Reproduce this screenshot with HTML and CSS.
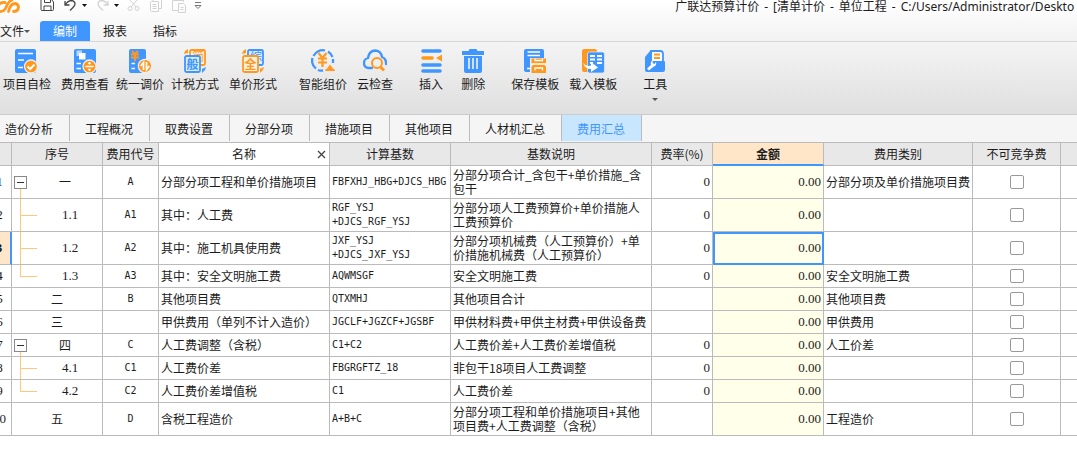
FILE: index.html
```
<!DOCTYPE html>
<html lang="zh-CN">
<head>
<meta charset="utf-8">
<title>广联达预算计价</title>
<link rel="stylesheet" href="styles.css">
</head>
<body>
<header class="top">
  <div class="titlebar">
    <div class="quick">
      <svg class="logo" width="22" height="15" viewBox="0 0 22 15" fill="none" stroke="#ff981f" stroke-width="2.800" stroke-linecap="round"><path d="M-1 4.500Q1 2 5 2.500M-1 11.500Q4 12 6 7.500Q8 1.500 12 0"/><path d="M8.500 11.500Q10 4 15 3.500Q18.500 4 18.500 7.500Q18 11.500 13.500 11.500"/></svg>
      <button class="qbtn save" aria-label="保存"><svg width="15" height="13" viewBox="0 0 15 13" fill="none" stroke="#444"><path d="M1 -1V9.500Q1 10.500 2 10.500H12.500Q13.500 10.500 13.500 9.500V2L11 -1M4.500 0V2.500H10.500V0M4 10V6H11V10"/></svg></button>
      <button class="qbtn undo" aria-label="撤销"><svg width="24" height="13" viewBox="0 0 24 13"><path d="M1 1V5H5.500M1.500 4.500Q4 .5 7.500 .5Q11 1 11 4Q11 6 6 10.500" fill="none" stroke="#444" stroke-width="1.300"/><path d="M18 4H23L20.500 7Z" fill="#111"/></svg></button>
      <button class="qbtn redo" aria-label="重做"><svg width="24" height="13" viewBox="0 0 24 13"><path d="M11 1V5H6.500M10.500 4.500Q8 .5 4.500 .5Q1 1 1 4Q1 6 6 10.500" fill="none" stroke="#d2d2d2" stroke-width="1.300"/><path d="M17 4H22L19.500 7Z" fill="#111"/></svg></button>
      <button class="qbtn cut" aria-label="剪切"><svg width="13" height="13" viewBox="0 0 13 13" fill="none" stroke="#d2d2d2"><path d="M2 -1L9 7M11 -1L4 7"/><circle cx="3" cy="8.500" r="2"/><circle cx="10" cy="8.500" r="2"/></svg></button>
      <button class="qbtn copy" aria-label="复制"><svg width="13" height="13" viewBox="0 0 13 13" fill="none" stroke="#d2d2d2"><path d="M3 1V-1H11.500V8.500H9M.5 2.500Q.5 1.500 1.500 1.500H8.500V11.500H1.500Q.5 11.500 .5 10.500ZM2.500 4.500H6.500M2.500 6.500H6.500M2.500 8.500H6.500"/></svg></button>
      <button class="qbtn paste" aria-label="粘贴"><svg width="15" height="14" viewBox="0 0 15 14" fill="none" stroke="#d2d2d2"><path d="M11.500 2V.5H.5V10.500H6M3 .5V-1M9 .5V-1M6.500 3.500H11.500L13.500 5.500V12.500H6.500ZM8.500 7.500H11.500M8.500 9.500H11.500"/></svg></button>
      <button class="qbtn more" aria-label="更多"><svg width="8" height="8" viewBox="0 0 8 8" fill="none" stroke="#777"><path d="M1 .5H7M1 3.500H7L4 6.500Z"/></svg></button>
    </div>
    <h1 class="title"><span>广联达预算计价</span><span>-</span><span>[清单计价</span><span>-</span><span>单位工程</span><span>-</span><span>C:/Users/Administrator/Deskto</span></h1>
  </div>
  <nav class="menu">
    <button class="file">文件<i class="caret"></i></button>
    <button class="item active">编制</button>
    <button class="item">报表</button>
    <button class="item">指标</button>
  </nav>
</header>

<section class="ribbon">
  <div class="group">
    <button class="tool"><svg viewBox="0 0 24 24"><rect width="21" height="24" rx="2" fill="#4096ff"/><path d="M3 4.500H18M3 11H9M3 18.500H8" stroke="#fff" stroke-width="1.600"/><circle cx="16" cy="17.500" r="6.500" fill="#ff981f" stroke="#eee" stroke-width="1.300"/><path d="M12.500 17.500L15.200 20L19.500 15.500" fill="none" stroke="#fff" stroke-width="2"/></svg>项目自检</button>
    <button class="tool"><svg viewBox="0 0 24 24"><rect x="1" width="22" height="24" rx="2" fill="#4096ff"/><path d="M3.500 1.500H9V7H3.500Z" fill="#b8d8ff"/><path d="M6 4H12.500V10.500H6Z" fill="#fff"/><path d="M3.500 14.500H8M3.500 19.500H8" stroke="#fff" stroke-width="1.600"/><circle cx="16.500" cy="17.500" r="6.500" fill="#ff981f" stroke="#eee" stroke-width="1.300"/><path d="M12.500 17.500H20.500" stroke="#fff" stroke-width="1.500"/><circle cx="16.500" cy="14.300" r="1.200" fill="#fff"/><circle cx="16.500" cy="20.700" r="1.200" fill="#fff"/></svg>费用查看</button>
    <button class="tool drop"><svg viewBox="0 0 24 24"><rect x="1" width="17" height="24" rx="2" fill="#4096ff"/><path d="M4 2L7 5L10 2M3 5.500H11M3 8.500H11M7 5V12" fill="none" stroke="#ff981f" stroke-width="1.900"/><path d="M3.500 14.500H7M3.500 19.500H7" stroke="#fff" stroke-width="1.500"/><circle cx="17" cy="17" r="6.700" fill="#ff981f" stroke="#eee" stroke-width="1.200"/><path d="M15.500 21V13.500L12.700 17M18.500 13V20.500L21.300 17" fill="none" stroke="#fff" stroke-width="1.700"/></svg>统一调价<i class="caret"></i></button>
    <button class="tool"><svg viewBox="0 0 24 24"><rect x="7" y="1" width="15" height="15" rx="1.500" fill="#fff0dd" stroke="#ff981f" stroke-width="1.800"/><text x="9" y="12" font-size="12" fill="#ff981f">简</text><rect x="2" y="7" width="15" height="16" rx="1.500" fill="#dcecff" stroke="#4096ff" stroke-width="1.800"/><text x="3.500" y="19.500" font-size="12" font-weight="700" fill="#4096ff">般</text><path d="M1 5L2 2L5 0V4Z" fill="#ff981f"/><path d="M23 18L22 21L19 24V20Z" fill="#4096ff"/></svg>计税方式</button>
    <button class="tool"><svg viewBox="0 0 24 24"><rect x="7" y="1" width="15" height="15" rx="1.500" fill="#dcecff" stroke="#4096ff" stroke-width="1.800"/><text x="9" y="12" font-size="12" fill="#4096ff">综</text><rect x="2" y="7" width="15" height="16" rx="1.500" fill="#fff0dd" stroke="#ff981f" stroke-width="1.800"/><text x="3.500" y="19.500" font-size="12" font-weight="700" fill="#ff981f">全</text><path d="M1 5L2 2L5 0V4Z" fill="#ff981f"/><path d="M23 18L22 21L19 24V20Z" fill="#ff981f"/></svg>单价形式</button>
  </div>
  <div class="group near">
    <button class="tool"><svg viewBox="0 0 24 24"><path d="M14 1.500A10 10 0 0 0 2.500 7M1.500 9A10 10 0 0 0 5 19.500M7 21Q9 22 12 21.500M17 2.500Q20 4.500 21.500 8M22 10V14" fill="none" stroke="#4096ff" stroke-width="2.300"/><path d="M7.500 4L11.500 9L15.500 4M7 9.500H16M7 13.500H16M11.500 9V18" fill="none" stroke="#ff981f" stroke-width="2.200"/><path d="M14 22Q14 20 16 19.500L19 15.500L22 19.500Q24 20 24 22Z" fill="#ff981f"/></svg>智能组价</button>
    <button class="tool"><svg viewBox="0 0 24 24"><path d="M9 19H5.500Q1 18.500 1 14Q1 10 5 9Q6 1.500 12.500 1.500Q18 2 19 8Q23.500 10 23 15" fill="none" stroke="#4096ff" stroke-width="2.300" stroke-linecap="round"/><circle cx="14" cy="14" r="5" fill="none" stroke="#ff981f" stroke-width="2"/><path d="M17.500 18L21 21.500" stroke="#ff981f" stroke-width="3"/></svg>云检查</button>
  </div>
  <div class="group wide">
    <button class="tool"><svg viewBox="0 0 24 24"><path d="M4 2H21M4 16H21M4 22H21" stroke="#4096ff" stroke-width="3.600" stroke-linecap="round"/><path d="M4 9H13" stroke="#ff981f" stroke-width="3.600" stroke-linecap="round"/><path d="M17 9L23 5.500V12.500Z" fill="#ff981f"/></svg>插入</button>
    <button class="tool"><svg viewBox="0 0 24 24"><path d="M8.500 0H15.500L16.500 2H23V6H1V2H7.500ZM3 7H21V22Q21 24 19 24H5Q3 24 3 22Z" fill="#4096ff"/><path d="M8 9V20M12 9V20M16 9V20" stroke="#f4f4f4" stroke-width="1.600"/></svg>删除</button>
  </div>
  <div class="group">
    <button class="tool"><svg viewBox="0 0 24 24"><rect x="1" width="20" height="23" rx="2" fill="#4096ff"/><path d="M4.500 3H17M4.500 6.500H17M4 19.500H7" stroke="#fff" stroke-width="1.500"/><path d="M7 9H24V24H7Z" fill="#eee"/><path d="M8.500 9.500H23V14.500L21.500 16L23 17.500V24H8.500V17.500L10 16L8.500 14.500Z" fill="#ff981f"/><path d="M12 9.500V11.500H19.500V9.500M8.500 15H23M12 21.500V19H19.500V21.500" fill="none" stroke="#fff" stroke-width="1.300"/></svg>保存模板</button>
    <button class="tool"><svg viewBox="0 0 24 24"><rect x="1" width="15" height="23" rx="2" fill="#ff981f"/><rect x="6.500" y="3" width="17" height="21" rx="2" fill="#4096ff" stroke="#eee" stroke-width=".7"/><path d="M9 7H14M9 10.500H14M9 14H12M16 7H21M16 10.500H21M16 14H21" stroke="#fff" stroke-width="1.800"/><path d="M2 14Q5 18 10 16.500V13L17 18.500L10 23V20Q4 20 2 14Z" fill="#fff"/></svg>载入模板</button>
  </div>
  <div class="group">
    <button class="tool"><svg viewBox="0 0 24 24"><path d="M8 2H17Q20 2 20 5V15H8Z" fill="#fff" stroke="#4096ff" stroke-width="1.800"/><path d="M11 5.500H17M11 9H17" stroke="#ff981f" stroke-width="1.900"/><path d="M2 8L7 2Q8 1 9 2V12H21Q22 12 22 13V21Q22 23 20 23H4Q2 23 2 21Z" fill="#4096ff"/><path d="M4 19.500L8 16Q7 12 10 11.500L9.500 14L11.500 15L13 13Q14 17 10 18L6 21.500Z" fill="#fff"/></svg>工具<i class="caret"></i></button>
  </div>
</section>

<nav class="tabs">
  <button class="tab">造价分析</button><button class="tab">工程概况</button><button class="tab">取费设置</button><button class="tab">分部分项</button><button class="tab">措施项目</button><button class="tab">其他项目</button><button class="tab">人材机汇总</button><button class="tab active">费用汇总</button>
</nav>

<main class="sheet">
<table>
  <colgroup><col class="c-num"><col class="c-seq"><col class="c-code"><col class="c-name"><col class="c-base"><col class="c-desc"><col class="c-rate"><col class="c-sum"><col class="c-kind"><col class="c-check"><col></colgroup>
  <thead>
    <tr><th></th><th>序号</th><th>费用代号</th><th class="sorted"><div class="head"><span>名称</span><button class="close" aria-label="关闭"><svg width="9" height="9" viewBox="0 0 9 9" stroke="#444" stroke-width="1.300"><path d="M1 1L8 8M8 1L1 8"/></svg></button></div></th><th>计算基数</th><th>基数说明</th><th>费率(%)</th><th class="current">金额</th><th>费用类别</th><th>不可竞争费</th><th></th></tr>
  </thead>
  <tbody>
    <tr class="tall"><td class="num">1</td><td class="parent"><div class="node"><button class="toggle" aria-label="折叠"></button><span>一</span></div></td><td class="code mid">A</td><td>分部分项工程和单价措施项目</td><td class="code">FBFXHJ_HBG+DJCS_HBG</td><td>分部分项合计_含包干+单价措施_含包干</td><td class="val">0</td><td class="val sum">0.00</td><td>分部分项及单价措施项目费</td><td class="mid"><input type="checkbox" aria-label="不可竞争费 1"></td><td></td></tr>
    <tr class="tall"><td class="num">2</td><td class="child">1.1</td><td class="code mid">A1</td><td>其中：人工费</td><td class="code">RGF_YSJ<br>+DJCS_RGF_YSJ</td><td>分部分项人工费预算价+单价措施人工费预算价</td><td class="val">0</td><td class="val sum">0.00</td><td></td><td class="mid"><input type="checkbox" aria-label="不可竞争费 2"></td><td></td></tr>
    <tr class="tall"><td class="num picked">3</td><td class="child">1.2</td><td class="code mid">A2</td><td>其中：施工机具使用费</td><td class="code">JXF_YSJ<br>+DJCS_JXF_YSJ</td><td>分部分项机械费（人工预算价）+单价措施机械费（人工预算价）</td><td class="val">0</td><td class="val sum focus">0.00</td><td></td><td class="mid"><input type="checkbox" aria-label="不可竞争费 3"></td><td></td></tr>
    <tr><td class="num">4</td><td class="child last">1.3</td><td class="code mid">A3</td><td>其中：安全文明施工费</td><td class="code">AQWMSGF</td><td>安全文明施工费</td><td class="val">0</td><td class="val sum">0.00</td><td>安全文明施工费</td><td class="mid"><input type="checkbox" aria-label="不可竞争费 4"></td><td></td></tr>
    <tr><td class="num">5</td><td class="mid">二</td><td class="code mid">B</td><td>其他项目费</td><td class="code">QTXMHJ</td><td>其他项目合计</td><td></td><td class="val sum">0.00</td><td>其他项目费</td><td class="mid"><input type="checkbox" aria-label="不可竞争费 5"></td><td></td></tr>
    <tr><td class="num">6</td><td class="mid">三</td><td></td><td>甲供费用（单列不计入造价）</td><td class="code">JGCLF+JGZCF+JGSBF</td><td>甲供材料费+甲供主材费+甲供设备费</td><td></td><td class="val sum">0.00</td><td>甲供费用</td><td class="mid"><input type="checkbox" aria-label="不可竞争费 6"></td><td></td></tr>
    <tr><td class="num">7</td><td class="parent"><div class="node"><button class="toggle" aria-label="折叠"></button><span>四</span></div></td><td class="code mid">C</td><td>人工费调整（含税）</td><td class="code">C1+C2</td><td>人工费价差+人工费价差增值税</td><td class="val">0</td><td class="val sum">0.00</td><td>人工价差</td><td class="mid"><input type="checkbox" aria-label="不可竞争费 7"></td><td></td></tr>
    <tr><td class="num">8</td><td class="child">4.1</td><td class="code mid">C1</td><td>人工费价差</td><td class="code">FBGRGFTZ_18</td><td>非包干18项目人工费调整</td><td class="val">0</td><td class="val sum">0.00</td><td></td><td class="mid"><input type="checkbox" aria-label="不可竞争费 8"></td><td></td></tr>
    <tr><td class="num">9</td><td class="child last">4.2</td><td class="code mid">C2</td><td>人工费价差增值税</td><td class="code">C1</td><td>人工费价差</td><td class="val">0</td><td class="val sum">0.00</td><td></td><td class="mid"><input type="checkbox" aria-label="不可竞争费 9"></td><td></td></tr>
    <tr class="tall"><td class="num">10</td><td class="mid">五</td><td class="code mid">D</td><td>含税工程造价</td><td class="code">A+B+C</td><td>分部分项工程和单价措施项目+其他项目费+人工费调整（含税）</td><td></td><td class="val sum">0.00</td><td>工程造价</td><td class="mid"><input type="checkbox" aria-label="不可竞争费 10"></td><td></td></tr>
  </tbody>
</table>
</main>
</body>
</html>
```

FILE: styles.css
```
* { box-sizing: border-box; }

body {
  margin: 0;
  background: #fff;
  color: #1c1c1c;
  font: 12px/16px "Noto Sans CJK SC", sans-serif;
  overflow: hidden;
}

button {
  margin: 0;
  padding: 0;
  border: 0;
  background: none;
  color: inherit;
  font: inherit;
}

svg { display: block; }

.caret {
  border: 3px solid transparent;
  border-top-color: #555;
  border-bottom: 0;
}

/* title and menu */
.top {
  background: linear-gradient(#fff, #f2f2f2);
  border-bottom: 1px solid #d6d6d6;
}

.titlebar {
  display: grid;
  grid-template-columns: 5fr 3fr;
  height: 21px;
}

.quick { display: flex; align-items: flex-start; }
.save { margin-left: 18px; }
.undo { margin-left: 9px; }
.redo { margin-left: 9px; }
.cut { margin-left: 6px; }
.copy { margin-left: 10px; }
.paste { margin-left: 9px; }
.more { margin: 2px 0 0 7px; }

.title {
  display: flex;
  gap: 5px;
  margin: 0;
  padding-left: 2px;
  font: 12px/14px "Noto Sans", "Noto Sans CJK SC", sans-serif;
  white-space: nowrap;
}

.menu { display: flex; height: 20px; }
.file { display: flex; align-items: center; width: 40px; white-space: nowrap; }
.item { width: 50px; border-radius: 3px 3px 0 0; }
.item.active { background: #4096ff; color: #fff; }

/* ribbon */
.ribbon {
  display: flex;
  gap: 26px;
  min-height: 72px;
  padding: 7px 3px 0;
  background: linear-gradient(#f4f4f4, #dfdfdf);
}

.group { display: flex; gap: 10px; }
.group.near { margin-left: -4px; }
.group.wide { gap: 18px; }

.tool {
  display: flex;
  flex-direction: column;
  align-items: center;
  gap: 3px;
  white-space: nowrap;
}

.tool svg { width: 24px; height: 24px; }
.tool .caret { margin-top: 3px; }
.drop { margin: 0 -3px; }

/* page tabs */
.tabs {
  display: flex;
  height: 28px;
  padding-bottom: 1px;
  border-top: 1px solid #ccc;
  background: #f5f5f5;
}

.tab { padding: 2px 16px 0 15px; border-right: 1px solid #bbb; white-space: nowrap; }
.tab:first-child { margin-left: -10px; }
.tab.active { background: #c9e6ff; color: #4096ff; }

/* fee table */
.sheet { overflow: hidden; border-top: 1px solid #bbb; }

table {
  width: calc(100% + 14px);
  margin-left: -12px;
  border-spacing: 0;
  table-layout: fixed;
  line-height: 14px;
}

.c-num { width: 24px; }
.c-seq { width: 91px; }
.c-code { width: 56px; }
.c-name { width: 171px; }
.c-base { width: 121px; }
.c-desc { width: 201px; }
.c-rate { width: 61px; }
.c-sum { width: 111px; }
.c-kind { width: 149px; }
.c-check { width: 88px; }

th, td {
  height: 23px;
  padding: 0 2px;
  border: solid #bbb;
  border-width: 0 1px 1px 0;
  vertical-align: middle;
}

th { background: #e8e8e8; font-weight: 400; white-space: nowrap; }
th.sorted { background: #fff; }
th.current { background: #ffe6c8; border-bottom: 2px solid #4096ff; font-weight: 700; }
.tall td { height: 33px; }

.head { display: flex; align-items: center; }
.head span { flex: 1; padding-left: 10px; }
.close { margin-right: 1px; }

.mid, .num { text-align: center; }
.val { text-align: right; }
.code { font-family: "DejaVu Sans Mono", monospace; font-size: 10px; }
.val, .num, .child { font-family: "Liberation Serif", serif; font-size: 13px; }
.num { padding: 0; }
.picked { background: #ffe6c8; border-right: 2px solid #4096ff; font-weight: 700; }
.sum { background: #ffffea; }
.focus { outline: 2px solid #4096ff; outline-offset: -2px; }

.node { display: flex; align-items: center; }
.node span { flex: 1; padding-left: 3px; text-align: center; }

.toggle {
  display: grid;
  place-items: center;
  width: 13px;
  height: 13px;
  border: 1px solid #888;
  background: #fff;
}

.toggle::before { content: ""; width: 7px; height: 1px; background: #333; }

.parent { background: linear-gradient(#ffc878, #ffc878) 8px 100% / 1px 50% no-repeat; }

.child {
  padding-left: 28px;
  text-align: center;
  background:
    linear-gradient(#ffc878, #ffc878) 8px 0 / 1px 100% no-repeat,
    linear-gradient(#ffc878, #ffc878) 8px 50% / 17px 1px no-repeat;
}

.child.last { background-size: 1px 50%, 17px 1px; }

input[type="checkbox"] {
  appearance: none;
  display: block;
  width: 14px;
  height: 14px;
  margin: 0 auto;
  border: 1px solid #999;
  border-radius: 2px;
  background: #fff;
}
```
